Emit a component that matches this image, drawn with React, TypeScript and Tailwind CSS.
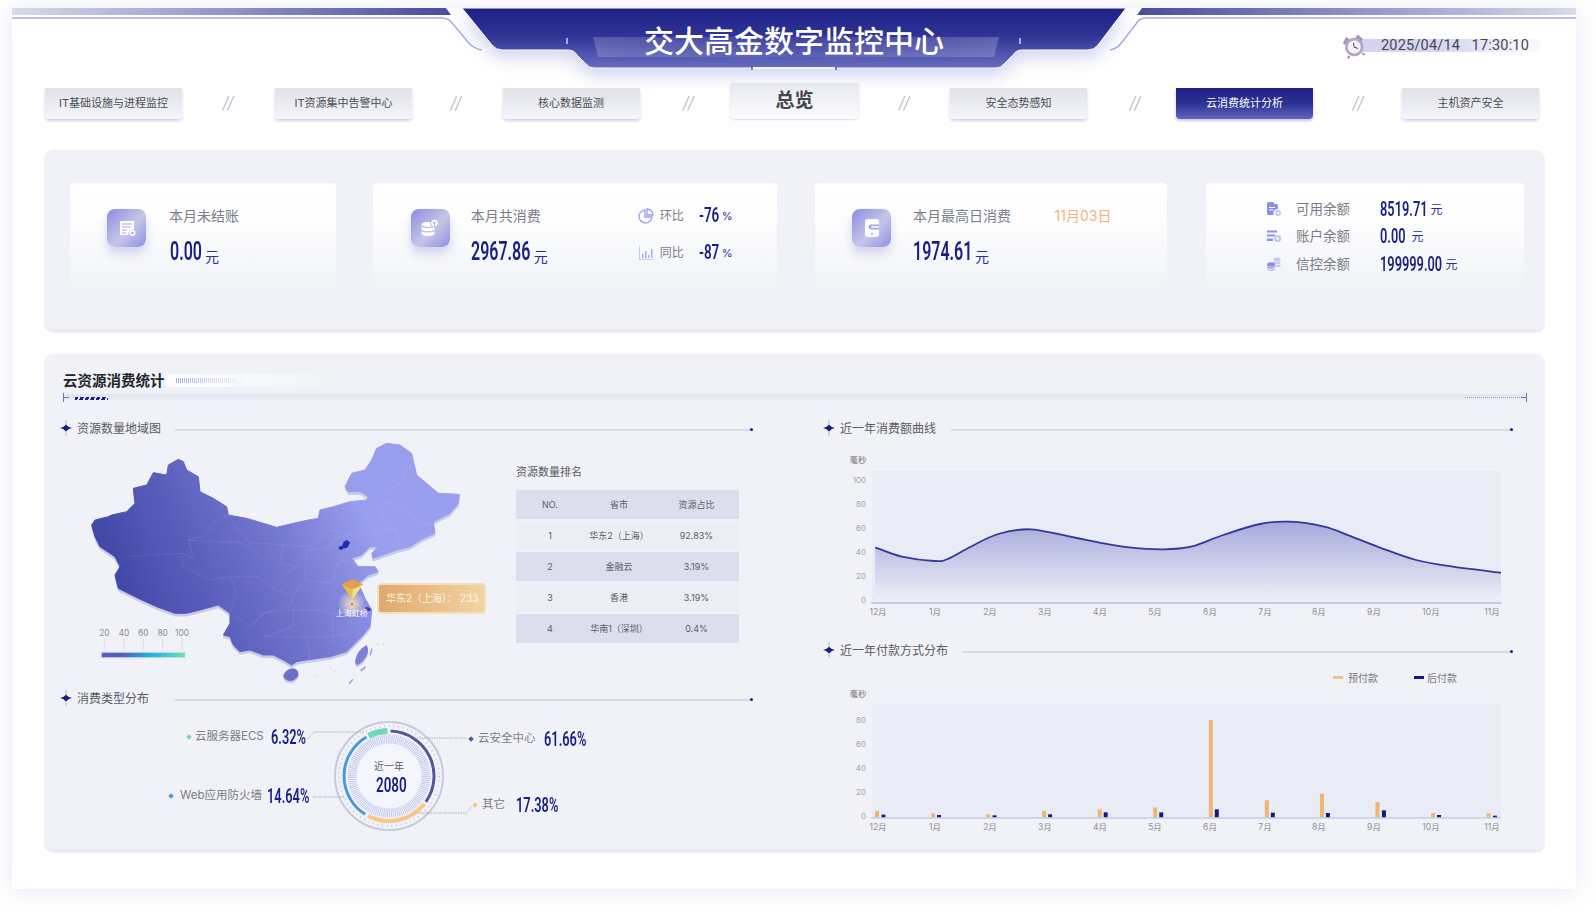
import React from "react";

type P = [number, number];

function smooth(pts: P[]): string {
  let d = `M${pts[0][0]} ${pts[0][1]}`;
  for (let i = 0; i < pts.length - 1; i++) {
    const p0 = pts[Math.max(0, i - 1)];
    const p1 = pts[i];
    const p2 = pts[i + 1];
    const p3 = pts[Math.min(pts.length - 1, i + 2)];
    const c1x = p1[0] + (p2[0] - p0[0]) / 6;
    const c1y = p1[1] + (p2[1] - p0[1]) / 6;
    const c2x = p2[0] - (p3[0] - p1[0]) / 6;
    const c2y = p2[1] - (p3[1] - p1[1]) / 6;
    d += ` C${c1x.toFixed(1)} ${c1y.toFixed(1)} ${c2x.toFixed(1)} ${c2y.toFixed(1)} ${p2[0].toFixed(1)} ${p2[1].toFixed(1)}`;
  }
  return d;
}

function arc(cx: number, cy: number, r: number, a0: number, a1: number): string {
  const pt = (a: number) => {
    const t = ((a - 90) * Math.PI) / 180;
    return `${(cx + r * Math.cos(t)).toFixed(2)} ${(cy + r * Math.sin(t)).toFixed(2)}`;
  };
  return `M${pt(a0)} A${r} ${r} 0 ${a1 - a0 > 180 ? 1 : 0} 1 ${pt(a1)}`;
}

function Num({ cls, children }: { cls: string; children: React.ReactNode }) {
  return (
    <span className={`inline-block [font-family:Roboto,sans-serif] font-semibold text-[#1a1f82] leading-none ${cls}`}>
      <span className="block origin-left scale-x-64 whitespace-nowrap">{children}</span>
    </span>
  );
}

function Yuan() {
  return <span className="text-[14px] text-[#2b308c] ml-[4px] leading-none">元</span>;
}

function Tab({ label, active, main }: { label: string; active?: boolean; main?: boolean }) {
  if (main) {
    return (
      <div className="w-[129px] h-[36px] -mt-[5px] shrink-0 rounded-b-[5px] rounded-t-[3px] bg-gradient-to-b from-[#e9eaf0] to-[#fbfbfe] shadow-[0_1px_2px_#d5d7e8] flex items-center justify-center text-[19px] font-semibold text-[#44464f]">
        {label}
      </div>
    );
  }
  return (
    <div
      className={
        active
          ? "w-[137px] h-[31px] shrink-0 rounded-b-[4px] bg-gradient-to-b from-[#1f2187] via-[#2d3193] to-[#6166bd] shadow-[0_2px_3px_#c8cae8] flex items-center justify-center text-[11px] text-white"
          : "w-[137px] h-[31px] shrink-0 rounded-b-[4px] bg-gradient-to-b from-[#e1e2e9] to-[#f5f6fb] shadow-[0_2px_3px_#cfd1ea] flex items-center justify-center text-[11px] text-[#4b4d56]"
      }
    >
      {label}
    </div>
  );
}

function Sep({ cls }: { cls: string }) {
  return <div className={`shrink-0 h-[31px] flex items-center justify-center text-[17px] font-light italic text-[#b2b4bf] tracking-[-1px] ${cls}`}>//</div>;
}

function IconBox({ children }: { children: React.ReactNode }) {
  return (
    <div className="w-[39px] h-[38px] shrink-0 rounded-[8px] bg-[linear-gradient(135deg,#8a8ae6_0%,#c6c6e8_55%,#8f8fe6_100%)] shadow-[0_7px_10px_#d5d6ec] flex items-center justify-center">
      {children}
    </div>
  );
}

function DocGlyph() {
  return (
    <svg width="18" height="18" viewBox="0 0 18 18">
      <path d="M2 2h14v8.5a4.5 4.5 0 0 0-5.5 5.5H2z" fill="#fff" />
      <path d="M4 5h10M4 8h9M4 11h5M4 14h4" stroke="#a5a5e2" strokeWidth="1.2" />
      <circle cx="14.5" cy="14" r="3" fill="#fff" />
      <circle cx="14.5" cy="14" r="1.2" fill="#9c9ce4" />
    </svg>
  );
}

function CoinGlyph() {
  return (
    <svg width="20" height="20" viewBox="0 0 20 20">
      <ellipse cx="8" cy="6.5" rx="6.5" ry="2.5" fill="#fff" />
      <path d="M1.5 8.5c1.5 2 11.5 2 13 0v3c-1.5 2-11.5 2-13 0zM1.5 13c1.5 2 11.5 2 13 0v3c-1.5 2.500-11.500 2.500-13 0z" fill="#fff" />
      <circle cx="14.500" cy="5" r="4" fill="#fff" stroke="#a8a8e4" strokeWidth="0.8" />
      <path d="M13 3.500l1.500 1.500 1.500-1.500M14.500 5v2.500" stroke="#8d8de2" strokeWidth="0.9" fill="none" />
    </svg>
  );
}

function WalletGlyph() {
  return (
    <svg width="18" height="20" viewBox="0 0 18 20">
      <rect x="2" y="1" width="14" height="18" rx="3" fill="#fff" />
      <path d="M16 6.500H8a2.500 2.500 0 0 0 0 5h8" fill="#a5a5e4" />
      <path d="M16 8.200H8.500a.9.9 0 0 0 0 1.600H16z" fill="#fff" />
      <circle cx="9" cy="15.800" r="1" fill="#a5a5e4" />
    </svg>
  );
}

function MiniFile() {
  return (
    <svg width="16" height="16" viewBox="0 0 16 16">
      <path d="M1 2.500A1.500 1.500 0 0 1 2.500 1H7l2 2h1.500A1.500 1.500 0 0 1 12 4.500V8a4 4 0 0 0-4 6H2.500A1.500 1.500 0 0 1 1 12.500z" fill="#8d8fe6" />
      <path d="M3 6.500h6M3 9h4" stroke="#fff" strokeWidth="1.100" />
      <circle cx="12" cy="12" r="3" fill="#c6c7f2" />
      <circle cx="12" cy="12" r="1" fill="#fff" />
    </svg>
  );
}

function MiniList() {
  return (
    <svg width="16" height="16" viewBox="0 0 16 16">
      <path d="M1 2.500h10v2H1zM1 6.500h8v2H1zM1 10.500h6v2.500H1z" fill="#8d8fe6" />
      <circle cx="11.500" cy="10.500" r="3.600" fill="#c6c7f2" />
      <circle cx="11.500" cy="10.500" r="1.300" fill="#fff" />
    </svg>
  );
}

function MiniCoins() {
  return (
    <svg width="16" height="16" viewBox="0 0 16 16">
      <ellipse cx="11" cy="3.500" rx="3.500" ry="2" fill="#c6c7f2" />
      <path d="M7.500 5c.8 1.400 6.200 1.400 7 0v2c-.8 1.400-6.200 1.400-7 0zM8.500 8.500c2 .8 5 .6 6 -.5v2c-.6 1-3 1.300-5 .9z" fill="#c6c7f2" />
      <ellipse cx="5" cy="8.500" rx="4" ry="2.200" fill="#8d8fe6" />
      <path d="M1 10c1 1.500 7 1.500 8 0v1.800c-1 1.500-7 1.500-8 0zM1 12.800c1 1.500 7 1.500 8 0v.8c-1 1.800-7 1.800-8 0z" fill="#a6a8ec" />
    </svg>
  );
}

function Star() {
  return (
    <svg width="12" height="16" viewBox="0 0 12 16" className="shrink-0">
      <path d="M6 0v16" stroke="#8b8dc9" strokeWidth="0.6" />
      <path d="M6 4.500L7.400 6.600 12 8 7.400 9.400 6 11.500 4.600 9.400 0 8 4.600 6.600z" fill="#1a1f82" />
      <circle cx="6" cy="8" r="2.600" fill="#1a1f82" />
    </svg>
  );
}

function SectionHead({ title, lineCls }: { title: string; lineCls: string }) {
  return (
    <div className="flex items-center h-[16px]">
      <Star />
      <span className="ml-[5px] pt-[1px] text-[12px] leading-[16px] text-[#5a5c66] whitespace-nowrap">{title}</span>
      <div className={`relative flex-1 h-[2px] mt-[3px] bg-[#d8daea] ${lineCls}`}>
        <span className="absolute -right-[1px] -top-[1px] w-[3px] h-[3px] rounded-full bg-[#1a1f82]" />
      </div>
    </div>
  );
}

const chinaOutline: P[] = [
  [125,525],[135,510],[175,500],[185,495],[230,485],[255,460],[250,415],[290,405],[310,368],[350,375],[355,345],[385,328],[400,335],[410,360],[445,380],[450,425],[490,445],[530,470],[535,495],[590,505],[640,520],[680,532],[730,520],[775,510],[805,505],[810,480],[850,470],[900,455],[950,450],[955,440],[930,425],[895,425],[885,410],[905,370],[945,360],[965,330],[980,295],[1010,280],[1050,285],[1085,310],[1100,375],[1130,400],[1165,430],[1228,433],[1225,460],[1200,490],[1150,515],[1155,550],[1120,565],[1080,590],[1040,600],[970,625],[965,610],[985,590],[960,590],[935,615],[905,625],[925,650],[975,650],[985,665],[955,675],[925,700],[945,745],[965,780],[960,830],[935,860],[915,880],[890,905],[840,920],[770,930],[740,935],[725,945],[700,930],[670,915],[640,915],[600,900],[570,905],[550,885],[540,860],[520,855],[540,820],[540,790],[505,765],[450,780],[410,790],[375,790],[320,770],[265,745],[205,715],[195,675],[210,650],[195,620],[150,590],[135,560],
];
const chinaPath = "M" + chinaOutline.map((p) => p.join(" ")).join("L") + "Z";

const provinces = [
  "M200 650L230 620L300 615L395 610L430 625L415 570L460 560L490 520L530 495",
  "M415 570L500 575L560 575L600 590L640 630",
  "M395 610L400 650L480 690L540 680L560 730L540 790",
  "M540 680L620 680L680 720L730 735L720 770L640 790L600 830L560 800",
  "M600 830L640 790L730 780L730 830L640 860",
  "M640 860L770 860L780 930M770 860L850 860L900 850",
  "M730 780L800 780L850 790L930 800M850 790L850 880",
  "M730 735L765 690L770 600L840 590L870 540M765 690L850 700L860 640L920 620",
  "M530 495L600 580L640 580L700 585L690 640L740 650L700 680",
  "M700 585L780 590L840 540L920 560L1000 540L1040 540L1050 590",
  "M990 470L1010 530L1040 540M990 470L1020 455L1075 480L1110 530L1150 520",
  "M1005 430L1050 400L1075 340",
];

function ChinaMap() {
  return (
    <svg width="420" height="254" viewBox="0 258 1260 762" className="shrink-0 -ml-[10px]">
      <defs>
        <linearGradient id="mapg" gradientUnits="userSpaceOnUse" x1="170" y1="700" x2="1040" y2="340">
          <stop offset="0" stopColor="#4045a6" />
          <stop offset="0.55" stopColor="#7477cf" />
          <stop offset="0.85" stopColor="#9a9eee" />
          <stop offset="1" stopColor="#9a9eee" />
        </linearGradient>
        <radialGradient id="glow">
          <stop offset="0" stopColor="#f6e9c8" stopOpacity="0.95" />
          <stop offset="1" stopColor="#f6e9c8" stopOpacity="0" />
        </radialGradient>
        <linearGradient id="leg" x1="0" x2="1" y1="0" y2="0">
          <stop offset="0" stopColor="#5a5cb8" />
          <stop offset="0.25" stopColor="#4d62c0" />
          <stop offset="0.6" stopColor="#1fb6df" />
          <stop offset="1" stopColor="#74dcb7" />
        </linearGradient>
      </defs>
      <path d={chinaPath} fill="#c8caee" stroke="#c8caee" strokeWidth="3" strokeLinejoin="round" transform="translate(0 8)" />
      <path d="M700 975q10-20 30-20q18 5 15 22q-15 20-30 15q-15-5-15-17z" fill="#c8caee" transform="translate(0 7)" />
      <path d="M915 935q5-35 35-50q8 15 0 32q-15 25-30 28z" fill="#c8caee" transform="translate(0 7)" />
      <path d={chinaPath} fill="url(#mapg)" stroke="url(#mapg)" strokeWidth="3" strokeLinejoin="round" />
      {provinces.map((d) => (
        <path key={d} d={d} fill="none" stroke="#ffffff" strokeOpacity="0.12" strokeWidth="2" strokeLinejoin="round" />
      ))}
      <path d="M700 975q10-20 30-20q18 5 15 22q-15 20-30 15q-15-5-15-17z" fill="#6d70c8" />
      <path d="M915 935q5-35 35-50q8 15 0 32q-15 25-30 28z" fill="#7c80d6" />
      <path d="M930 960l15-12 3 5-14 12zM958 915l6-20 4 2-5 20zM895 1000l12-14 4 3-12 14z" fill="#a4a7e8" />
      <path d="M980 880l6 3-3 5zM998 880l4 4-4 2zM840 950l5 6-4 2zM852 958l5 5-4 2zM800 975l3 6-3 1z" fill="#c3c5ee" />
      <path d="M867 590l10-3 4-12 10-5 9 8-8 15-14 3-4 4-8-3z" fill="#222ab8" />
      <path d="M947 770l12 3 5 8-10 3-8-6z" fill="#3a40ae" />
      <circle cx="905" cy="762" r="42" fill="url(#glow)" />
      <ellipse cx="906" cy="763" rx="12" ry="6" fill="#f0c493" opacity="0.7" />
      <circle cx="906" cy="763" r="3" fill="#ef4b3c" />
      <path d="M875 703L907 748L907 718z" fill="#eebc4b" />
      <path d="M940 703L907 748L907 718z" fill="#f8e37a" />
      <path d="M875 703L907 688L940 703L907 718z" fill="#e69f4e" />
      <text x="905" y="798" textAnchor="middle" fontSize="24" fill="#ffffff">上海虹桥</text>
      {[163, 222, 280, 338, 396].map((x, i) => (
        <g key={x}>
          <text x={x} y="858" textAnchor="middle" fontSize="25" fill="#8a8c97">{[20, 40, 60, 80, 100][i]}</text>
          <path d={`M${x} 866V902`} stroke="#b5b7c4" strokeWidth="2" strokeDasharray="3 3" />
        </g>
      ))}
      <rect x="149" y="903" width="262" height="25" fill="#eceef6" />
      <rect x="155" y="908" width="250" height="14" fill="url(#leg)" />
    </svg>
  );
}

const rows = [
  ["1", "华东2（上海）", "92.83%"],
  ["2", "金融云", "3.19%"],
  ["3", "香港", "3.19%"],
  ["4", "华南1（深圳）", "0.4%"],
];

function RankTable() {
  return (
    <div className="ml-[46px] w-[223px] pt-[28px]">
      <div className="text-[11px] leading-[16px] text-[#5a5c66]">资源数量排名</div>
      <div className="mt-[10px] flex flex-col gap-[2px] text-[9px] text-[#5a5c66]">
        <div className="grid grid-cols-[68px_70px_85px] h-[29px] items-center text-center bg-[#dcdeed]">
          <span>NO.</span>
          <span>省市</span>
          <span>资源占比</span>
        </div>
        {rows.map((r, i) => (
          <div
            key={r[0]}
            className={
              i % 2 === 0
                ? "grid grid-cols-[68px_70px_85px] h-[29px] items-center text-center bg-[#eceef6]"
                : "grid grid-cols-[68px_70px_85px] h-[29px] items-center text-center bg-[#dcdeed]"
            }
          >
            <span>{r[0]}</span>
            <span className="whitespace-nowrap">{r[1]}</span>
            <span>{r[2]}</span>
          </div>
        ))}
      </div>
    </div>
  );
}

function Legend({ cls, dot, label, value, vcls, lcls }: { cls: string; dot: string; label: string; value: string; vcls: string; lcls: string }) {
  return (
    <div className={`absolute flex items-center h-[20px] whitespace-nowrap ${cls}`}>
      <span className={`w-[4px] h-[4px] rotate-45 ${dot}`} />
      <span className={`text-[11.5px] text-[#7b7d88] ${lcls}`}>{label}</span>
      <Num cls={`text-[20px] ${vcls}`}>{value}</Num>
    </div>
  );
}

function Donut() {
  const cx = 329;
  const cy = 70;
  return (
    <div className="relative h-[144px]">
      <svg width="692" height="144" viewBox="0 0 692 144" className="absolute left-0 top-0">
        <circle cx={cx} cy={cy} r="54" fill="#f1f3fa" stroke="#c6cbdc" strokeWidth="2" />
        <circle cx={cx} cy={cy} r="50" fill="none" stroke="#b4b8cc" strokeWidth="2" strokeDasharray="0.7 4" />
        <circle cx={cx} cy={cy} r="37" fill="none" stroke="#bdc0ea" strokeWidth="9" strokeDasharray="0.8 1.1" />
        <circle cx={cx} cy={cy} r="32" fill="#f4f6fc" />
        <path d={arc(cx, cy, 45, 2, 125)} fill="none" stroke="#55579a" strokeWidth="3" />
        <path d={arc(cx, cy, 45, 128, 208)} fill="none" stroke="#fcc583" strokeWidth="4" />
        <path d={arc(cx, cy, 45, 212, 330)} fill="none" stroke="#4f98d8" strokeWidth="3" />
        <path d={arc(cx, cy, 45, 333, 358)} fill="none" stroke="#6fd9b6" strokeWidth="6" />
        <g fill="none" stroke="#8f919c" strokeWidth="0.7" strokeDasharray="1.500 1">
          <path d="M248 33l6-7h50" />
          <path d="M354 32h53" />
          <path d="M253 91h32" />
          <path d="M358 107h48l6-7" />
        </g>
        <text x={cx} y="64" textAnchor="middle" fontSize="10" fill="#5a5c66">近一年</text>
      </svg>
      <div className="absolute left-[316px] top-[68px]">
        <Num cls="text-[21px] w-[26px]">2080</Num>
      </div>
      <Legend cls="left-[127px] top-[21px]" dot="bg-[#6fd9b6]" label="云服务器ECS" value="6.32%" vcls="ml-[7px] w-[34px]" lcls="ml-[4px]" />
      <Legend cls="left-[409px] top-[23px]" dot="bg-[#55579a]" label="云安全中心" value="61.66%" vcls="ml-[8px] w-[40px]" lcls="ml-[5px]" />
      <Legend cls="left-[109px] top-[80px]" dot="bg-[#4a9be0]" label="Web应用防火墙" value="14.64%" vcls="ml-[5px] w-[40px]" lcls="ml-[7px]" />
      <Legend cls="left-[413px] top-[89px]" dot="bg-[#fcc583]" label="其它" value="17.38%" vcls="ml-[11px] w-[40px]" lcls="ml-[5px]" />
    </div>
  );
}

const monthX = [878, 935, 990, 1045, 1100, 1155, 1210, 1265, 1319, 1374, 1431, 1492];
const months = ["12月", "1月", "2月", "3月", "4月", "5月", "6月", "7月", "8月", "9月", "10月", "11月"];
const zx = (z: number) => 810 + z / 2.178;

const curve: P[] = (
  [[142,412],[200,440],[270,453],[300,447],[350,410],[410,372],[480,358],[560,378],[640,400],[700,413],[770,418],[830,410],[900,375],[980,342],[1045,335],[1120,350],[1180,380],[1240,412],[1320,450],[1400,470],[1505,488]] as P[]
).map(([x, y]) => [zx(x), 410 + y / 3] as P);

function LineChart() {
  const line = smooth(curve);
  return (
    <svg width="689" height="170" viewBox="823 450 689 170" className="block">
      <defs>
        <linearGradient id="area" x1="0" x2="0" y1="0" y2="1">
          <stop offset="0" stopColor="#a6a9da" />
          <stop offset="1" stopColor="#eff1f8" />
        </linearGradient>
      </defs>
      <rect x="872" y="471" width="629" height="132" fill="#e9ecf4" />
      <path d={`${line} L1501 603 L875 603Z`} fill="url(#area)" />
      <path d={line} fill="none" stroke="#343899" strokeWidth="1.800" />
      <path d="M871 603H1501" stroke="#9a9ed8" strokeWidth="1.200" />
      <text x="858" y="463" textAnchor="middle" fontSize="8.500" fill="#777983">毫秒</text>
      {[[100, 480], [80, 504], [60, 528], [40, 552], [20, 576], [0, 600]].map(([v, y]) => (
        <text key={v} x="866" y={y + 3} textAnchor="end" fontSize="8" fill="#a2a4ae">{v}</text>
      ))}
      {months.map((m, i) => (
        <text key={m} x={monthX[i]} y="615" textAnchor="middle" fontSize="8.500" fill="#8f919b">{m}</text>
      ))}
    </svg>
  );
}

const orange: P[] = [[146,528],[268,535],[388,538],[510,528],[631,523],[752,517],[873,255],[995,496],[1115,476],[1236,501],[1357,534],[1478,535]];
const navy: P[] = [[160,539],[281,540],[402,541],[523,538],[644,532],[765,532],[886,523],[1008,533],[1128,534],[1250,526],[1370,540],[1492,542]];

function BarChart() {
  const base = 635 + 548 / 3;
  return (
    <svg width="689" height="170" viewBox="823 665 689 170" className="block">
      <rect x="872" y="704" width="629" height="114" fill="#e9ecf4" />
      {orange.map(([x, y]) => (
        <rect key={x} x={zx(x) - 2} y={635 + y / 3} width="4" height={base - (635 + y / 3)} fill="#edb577" />
      ))}
      {navy.map(([x, y]) => (
        <rect key={x} x={zx(x) - 2} y={635 + y / 3} width="4" height={base - (635 + y / 3)} fill="#141a80" />
      ))}
      <path d="M871 818H1501" stroke="#c9cbe5" strokeWidth="1.500" />
      <rect x="1333" y="676" width="10" height="3" fill="#edc48f" />
      <text x="1348" y="682" fontSize="10" fill="#777983">预付款</text>
      <rect x="1414" y="676" width="10" height="3" fill="#141a80" />
      <text x="1427" y="682" fontSize="10" fill="#777983">后付款</text>
      <text x="858" y="697" textAnchor="middle" fontSize="8.500" fill="#777983">毫秒</text>
      {[[80, 720], [60, 744], [40, 768], [20, 792], [0, 816]].map(([v, y]) => (
        <text key={v} x="866" y={y + 3} textAnchor="end" fontSize="8" fill="#a2a4ae">{v}</text>
      ))}
      {months.map((m, i) => (
        <text key={m} x={monthX[i]} y="830" textAnchor="middle" fontSize="8.500" fill="#8f919b">{m}</text>
      ))}
    </svg>
  );
}

function HeaderArt() {
  const shape = "M462 8H1126L1098 45Q1094 50 1088 50H1022Q1016 50 1013 55L1004 64Q1001 68 996 68H594Q589 68 586 64L577 55Q574 50 568 50H502Q496 50 492 45Z";
  return (
    <svg width="1564" height="80" viewBox="12 8 1564 80" className="absolute left-0 top-0">
      <defs>
        <linearGradient id="barL" x1="0" x2="1" y1="0" y2="0">
          <stop offset="0" stopColor="#d9daec" />
          <stop offset="1" stopColor="#474c9e" />
        </linearGradient>
        <linearGradient id="barR" x1="1" x2="0" y1="0" y2="0">
          <stop offset="0" stopColor="#d9daec" />
          <stop offset="1" stopColor="#474c9e" />
        </linearGradient>
        <linearGradient id="hdr" x1="0" x2="0" y1="0" y2="1">
          <stop offset="0" stopColor="#1e2087" />
          <stop offset="0.45" stopColor="#2f3395" />
          <stop offset="1" stopColor="#686dc0" />
        </linearGradient>
        <linearGradient id="band" x1="0" x2="1" y1="0" y2="0">
          <stop offset="0" stopColor="#ffffff" stopOpacity="0.18" />
          <stop offset="0.5" stopColor="#ffffff" stopOpacity="0.05" />
          <stop offset="1" stopColor="#ffffff" stopOpacity="0.2" />
        </linearGradient>
      </defs>
      <path d={shape} fill="#9ea1dc" opacity="0.5" transform="translate(0 7)" className="blur-[9px]" />
      <path d="M12 8H446L451 15H12Z" fill="url(#barL)" />
      <path d="M1576 8H1142L1137 15H1576Z" fill="url(#barR)" />
      <path d="M12 18H442Q449 18 453 24L468 42Q474 49 482 50" fill="none" stroke="#a9acdb" strokeWidth="1.500" />
      <path d="M1576 18H1146Q1139 18 1136 24L1122 42Q1117 49 1110 50" fill="none" stroke="#a9acdb" strokeWidth="1.500" />
      <path d={shape} fill="url(#hdr)" stroke="#ffffff" strokeWidth="1" />
      <path d="M593 37H999L994 57H598Z" fill="url(#band)" />
      <path d="M567 38v6M1020 38v6" stroke="#cfe0ff" strokeWidth="1.400" />
      <path d="M752 68h84" stroke="#ffffff" strokeWidth="1.500" />
      <path d="M752 67v3M836 67v3" stroke="#4a4fa8" strokeWidth="1.500" />
    </svg>
  );
}

function Clock() {
  return (
    <svg width="24" height="24" viewBox="0 0 22 22" className="shrink-0 -rotate-12">
      <path d="M1.500 6.500l4-5 3 2.500-5 4.500zM20.500 6.500l-4-5-3 2.500 5 4.500z" fill="#a595bd" />
      <path d="M5 19l-2 2M17 19l2 2" stroke="#a595bd" strokeWidth="1.800" />
      <circle cx="11" cy="12" r="8.500" fill="#b3a5c8" />
      <circle cx="11" cy="12" r="6" fill="#f3f1f6" />
      <path d="M11 8v4l3 2" stroke="#54506c" strokeWidth="1" fill="none" />
    </svg>
  );
}

function Card({ cls, children }: { cls: string; children: React.ReactNode }) {
  return (
    <div className={`relative h-[110px] rounded-t-[4px] bg-gradient-to-b from-[#ffffff] via-[#fdfdfe] via-35% to-[#f0f2f7] ${cls}`}>
      {children}
    </div>
  );
}

function StatRow({ icon, label, val, w }: { icon: React.ReactNode; label: string; val: string; w: string }) {
  return (
    <div className="flex items-center h-[27.500px]">
      <span className="w-[30px] shrink-0">{icon}</span>
      <span className="w-[84.500px] text-[13.500px] text-[#797b85]">{label}</span>
      <Num cls={`text-[20px] ${w}`}>{val}</Num>
      <span className="text-[12px] text-[#2b308c] ml-[6px] mt-[2px]">元</span>
    </div>
  );
}

export default function App() {
  return (
    <div className="w-[1596px] h-[912px] overflow-hidden bg-white pt-[8px] pl-[12px] text-[#44464f] [font-family:Inter,'Noto_Sans_CJK_SC',sans-serif]">
      <div className="w-[1564px] h-[881px] bg-white shadow-[0_2px_22px_rgba(170,175,215,0.28)]">
        <div className="relative h-[80px]">
          <HeaderArt />
          <div className="absolute left-[482px] w-[600px] top-[16px] text-center text-[30px] leading-[34px] font-medium text-white">
            交大高金数字监控中心
          </div>
          <div className="absolute right-[36px] top-[31px] w-[184px] h-[13px] bg-gradient-to-r from-[#d2d2ef] via-[#d8d8f1] to-[#fbfbfe] flex items-center">
            <span className="absolute -left-[14px] -top-[5px]">
              <Clock />
            </span>
            <span className="ml-[25px] text-[14.500px] tracking-[0.2px] text-[#45474f] whitespace-pre [font-family:Roboto,sans-serif]">2025/04/14   17:30:10</span>
          </div>
        </div>

        <div className="ml-[33px] flex w-[1494px]">
          <Tab label="IT基础设施与进程监控" />
          <Sep cls="w-[93px] pr-[2px]" />
          <Tab label="IT资源集中告警中心" />
          <Sep cls="w-[90.500px] pr-[4px]" />
          <Tab label="核心数据监测" />
          <Sep cls="w-[90.500px] pl-[6px]" />
          <Tab label="总览" main />
          <Sep cls="w-[91px] pr-[2px]" />
          <Tab label="安全态势感知" />
          <Sep cls="w-[89px] pl-[6px]" />
          <Tab label="云消费统计分析" active />
          <Sep cls="w-[89px]" />
          <Tab label="主机资产安全" />
        </div>

        <div className="ml-[33px] w-[1499px] mt-[31px] h-[180px] rounded-[8px] bg-[#f0f2f7] shadow-[0_2px_3px_#e1e3f1] pl-[25px] pt-[33px] flex gap-[37.300px]">
          <Card cls="w-[266px] flex pl-[37px] pt-[26px]">
            <IconBox>
              <DocGlyph />
            </IconBox>
            <div className="ml-[23px] -mt-[2px]">
              <div className="text-[14px] leading-[18px] text-[#7b7d87]">本月未结账</div>
              <div className="mt-[14px] ml-[1px] flex items-end">
                <Num cls="text-[25px] w-[31px]">0.00</Num>
                <Yuan />
              </div>
            </div>
          </Card>
          <Card cls="w-[404px] flex pl-[37.500px] pt-[26px]">
            <IconBox>
              <CoinGlyph />
            </IconBox>
            <div className="ml-[21px] -mt-[2px] w-[167px]">
              <div className="text-[14px] leading-[18px] text-[#7b7d87]">本月共消费</div>
              <div className="mt-[14px] flex items-end">
                <Num cls="text-[25px] w-[59px]">2967.86</Num>
                <Yuan />
              </div>
            </div>
            <div className="-mt-[2px]">
              <div className="flex items-center h-[18px]">
                <svg width="16" height="18" viewBox="0 0 16 18" fill="none" stroke="#9a9cf2" strokeWidth="1.300">
                  <path d="M7 3a6.500 6.500 0 1 0 7 7H7z" />
                  <path d="M9 2a6 6 0 0 1 6 6H9z" />
                </svg>
                <span className="ml-[6px] w-[39px] text-[12px] text-[#7b7d87]">环比</span>
                <Num cls="text-[21px] w-[18px] -mt-[2px]">-76</Num>
                <span className="ml-[5px] text-[11px] text-[#2b308c]">%</span>
              </div>
              <div className="flex items-center h-[18px] mt-[19px]">
                <svg width="16" height="16" viewBox="0 0 16 16" fill="#a9abf3">
                  <path d="M1 1h1v13h13v1H1z" opacity="0.6" />
                  <path d="M4 9h1.500v4H4zM7 6h1.500v7H7zM10 10h1.500v3H10zM13 4h1.500v9H13z" />
                </svg>
                <span className="ml-[6px] w-[39px] text-[12px] text-[#7b7d87]">同比</span>
                <Num cls="text-[21px] w-[18px] -mt-[2px]">-87</Num>
                <span className="ml-[5px] text-[11px] text-[#2b308c]">%</span>
              </div>
            </div>
          </Card>
          <Card cls="w-[352px] flex pl-[37.500px] pt-[26px]">
            <IconBox>
              <WalletGlyph />
            </IconBox>
            <div className="ml-[22px] -mt-[2px]">
              <div className="flex items-center">
                <span className="w-[141.500px] text-[14px] leading-[18px] text-[#7b7d87]">本月最高日消费</span>
                <span className="text-[14px] leading-[18px] text-[#eeb677]">11月03日</span>
              </div>
              <div className="mt-[14px] flex items-end">
                <Num cls="text-[25px] w-[58px]">1974.61</Num>
                <Yuan />
              </div>
            </div>
          </Card>
          <Card cls="w-[318px] ml-[2px] pl-[60px] pt-[12px]">
            <StatRow icon={<MiniFile />} label="可用余额" val="8519.71" w="w-[44px]" />
            <StatRow icon={<MiniList />} label="账户余额" val="0.00" w="w-[25px]" />
            <StatRow icon={<MiniCoins />} label="信控余额" val="199999.00" w="w-[59px]" />
          </Card>
        </div>

        <div className="ml-[33px] w-[1499px] mt-[24px] h-[496px] rounded-[8px] bg-[#f0f2f7] shadow-[0_2px_3px_#e1e3f1]">
          <div className="pt-[13px] pl-[18px] flex items-center h-[40px]">
            <span className="text-[14.500px] leading-[20px] font-bold text-[#24262e] whitespace-nowrap">云资源消费统计</span>
            <div className="ml-[1px] w-[175px] h-[13px] bg-gradient-to-r from-[#ffffff] to-[#f0f2f7] flex items-center pl-[10px]">
              <span className="block w-[70px] h-[5px] bg-[repeating-linear-gradient(90deg,#a9abd6_0,#a9abd6_1px,transparent_1px,transparent_2px)] [mask-image:linear-gradient(90deg,#000,transparent)]" />
            </div>
          </div>
          <div className="relative ml-[18px] w-[1464px] h-[6px] bg-[linear-gradient(180deg,#e1e3ed_0%,#e6e8f1_50%,#eceef5_100%)]">
            <span className="absolute left-0 -top-[1px] w-px h-[9px] bg-[#6d70b5]" />
            <span className="absolute left-0 top-[3px] w-[6px] h-px bg-[#6d70b5]" />
            <span className="absolute left-[12px] top-[3px] w-[33px] h-[3px] bg-[repeating-linear-gradient(115deg,#1a1f82_0,#1a1f82_3px,transparent_3px,transparent_5px)]" />
            <span className="absolute right-0 -top-[1px] w-px h-[9px] bg-[#6d70b5]" />
            <span className="absolute right-0 top-[3px] w-[6px] h-px bg-[#6d70b5]" />
            <span className="absolute right-[7px] top-[3px] w-[55px] h-px bg-[repeating-linear-gradient(90deg,#9b9dc9_0,#9b9dc9_1px,transparent_1px,transparent_2px)]" />
          </div>
          <div className="flex mt-[20px] pl-[15px]">
            <div className="w-[692px] shrink-0">
              <SectionHead title="资源数量地域图" lineCls="ml-[14px]" />
              <div className="relative flex h-[254px]">
                <ChinaMap />
                <div className="absolute left-[317px] top-[147px] w-[109px] h-[31px] rounded-[4px] border-2 border-[#f3dfbd] bg-gradient-to-r from-[#e0a96c] to-[#f3d3a3] flex items-center pl-[7px] text-[10px] text-[#fdf5e6] whitespace-nowrap">
                  华东2（上海）： 233
                </div>
                <RankTable />
              </div>
              <SectionHead title="消费类型分布" lineCls="ml-[26px]" />
              <Donut />
            </div>
            <div className="ml-[71px] w-[689px] shrink-0">
              <SectionHead title="近一年消费额曲线" lineCls="ml-[15px]" />
              <div className="mt-[14px]">
                <LineChart />
              </div>
              <div className="mt-[22px]">
                <SectionHead title="近一年付款方式分布" lineCls="ml-[15px]" />
              </div>
              <div className="mt-[7px]">
                <BarChart />
              </div>
            </div>
          </div>
        </div>
      </div>
    </div>
  );
}
